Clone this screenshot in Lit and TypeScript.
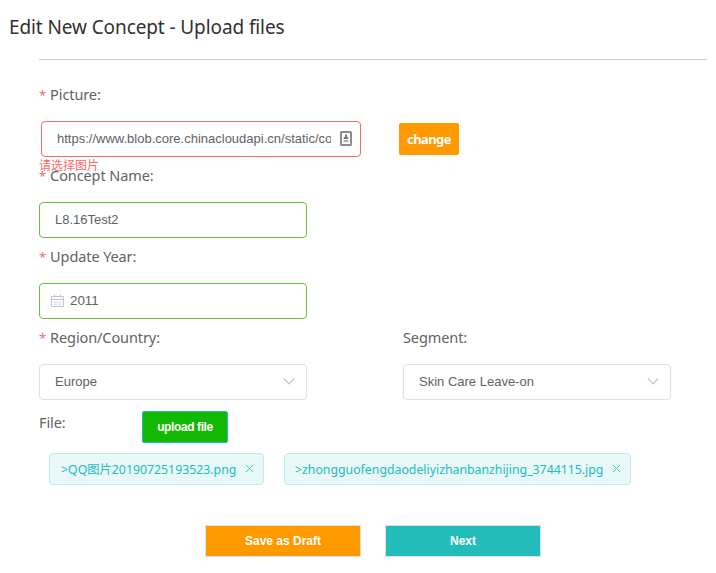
import { LitElement, html, css } from "lit";
import { customElement } from "lit/decorators.js";

const chevron = html`<svg class="chev" viewBox="0 0 12 8" width="12" height="8">
  <path d="M.8 1.5 6 6.8 11.2 1.5" fill="none" stroke="#c0c4cc" stroke-width="1.2" />
</svg>`;

const closeIcon = html`<svg class="close" viewBox="0 0 9 9" width="9" height="9">
  <path d="M.8 .8 8.2 8.2M8.2 .8 .8 8.2" fill="none" stroke="#4fc4c4" stroke-width="1" />
</svg>`;

const calendar = html`<svg class="cal" viewBox="0 0 13 13" width="13" height="13">
  <g fill="none" stroke="#c0c4cc">
    <path d="M.5 2.5h12v10H.5zM.5 5.5h12M3.5 .5v3M9.5 .5v3" />
    <path d="M3 8h7M3 10.2h7" stroke-dasharray="1.6 1.1" />
  </g>
</svg>`;

const contact = html`<svg viewBox="0 0 12 15" width="12" height="15">
  <rect x="1" y="1" width="10" height="13" rx=".6" fill="#fff" stroke="#8c8c8c" stroke-width="2" />
  <path d="M5 3.5h2V6h1.2v2H3.8V6H5z" fill="#777" />
  <path d="M3.5 9h5v2.2h-5z" fill="#b0b0b0" />
</svg>`;

@customElement("app-root")
export class AppRoot extends LitElement {
  static styles = css`
    :host {
      display: block;
      box-sizing: border-box;
      height: 573px;
      overflow: hidden;
      background: #fff;
      color: #606266;
      font-family: "Noto Sans", "Noto Sans CJK SC", sans-serif;
    }
    * { box-sizing: border-box; }
    svg { display: block; flex: none; }
    h1 {
      margin: 0;
      padding: 12px 0 0 9px;
      height: 59px;
      font-size: 19px;
      line-height: 30px;
      font-weight: 400;
      letter-spacing: -0.1px;
      color: #303133;
      white-space: nowrap;
    }
    .body { margin: 0 9px 0 39px; border-top: 1px solid #c8c8c8; padding-top: 15px; }
    .label { height: 40px; line-height: 38px; font-size: 14.5px; letter-spacing: -0.1px; white-space: nowrap; }
    .req::before { content: "*"; color: #f56c6c; font-size: 13px; margin-right: 4px; }
    .item { height: 81px; }
    .box {
      display: flex;
      align-items: center;
      width: 268px;
      height: 36px;
      margin-top: 6px;
      padding: 0 11px 2px 15px;
      border: 1px solid #dcdfe6;
      border-radius: 4px;
      font: 13px "Liberation Sans", sans-serif;
      white-space: nowrap;
    }
    .valid { border-color: #67c23a; }
    .picrow { display: flex; align-items: center; height: 36px; margin: 6px 0 0 2px; }
    .pic { width: 320px; margin: 0; border-color: #f56c6c; padding-right: 8px; }
    .url { width: 274px; overflow: hidden; margin-right: 9px; }
    .error { height: 0; font-size: 12px; line-height: 12px; position: relative; top: 3px; color: #f56c6c; }
    .change {
      width: 60px;
      height: 32px;
      margin-left: 38px;
      border-radius: 2px;
      background: #ff9900;
      color: #fff;
      font-size: 13px;
      font-weight: 700;
      letter-spacing: -0.6px;
      line-height: 32px;
      text-align: center;
    }
    .year { padding-left: 11px; font-size: 13.33px; }
    .cal { margin-right: 6px; }
    .cols { display: flex; gap: 96px; }
    .chev { margin-left: auto; }
    .file { display: flex; align-items: flex-start; height: 52px; padding-top: 4px; }
    .file .label { width: 103px; }
    .upload {
      width: 86px;
      height: 32px;
      margin-top: 8px;
      border: 1px solid #22bdbd;
      border-radius: 2px;
      background: #13b803;
      color: #fff;
      font: 700 12px/30px "Liberation Sans", sans-serif;
      letter-spacing: -0.4px;
      text-align: center;
    }
    .tags { display: flex; gap: 20px; padding: 2px 0 0 10px; }
    .tag {
      display: flex;
      justify-content: space-between;
      height: 32px;
      padding: 0 9px 0 11px;
      border: 1px solid #bdebeb;
      border-radius: 4px;
      background: #e8f7f7;
      color: #22bdbd;
      font-size: 12.3px;
      line-height: 31px;
      white-space: nowrap;
    }
    .t1 { width: 215px; }
    .t2 { width: 347px; padding-left: 10px; }
    .close { margin-top: 10px; }
    .actions { display: flex; gap: 24px; padding: 40px 0 0 166px; }
    .btn {
      width: 156px;
      height: 32px;
      border: 1px solid #dcdfe6;
      color: #fff;
      font: 700 12px/31px "Liberation Sans", sans-serif;
      text-align: center;
    }
    .draft { background: #ff9900; }
    .next { background: #22bdbb; }
  `;

  render() {
    return html`
      <h1>Edit New Concept - Upload files</h1>
      <div class="body">
        <div class="item">
          <div class="label req">Picture:</div>
          <div class="picrow">
            <div class="box pic"><span class="url">https://www.blob.core.chinacloudapi.cn/static/concept</span>${contact}</div>
            <div class="change">change</div>
          </div>
          <div class="error">请选择图片</div>
        </div>
        <div class="item">
          <div class="label req">Concept Name:</div>
          <div class="box valid">L8.16Test2</div>
        </div>
        <div class="item">
          <div class="label req">Update Year:</div>
          <div class="box valid year">${calendar}2011</div>
        </div>
        <div class="cols item">
          <div>
            <div class="label req">Region/Country:</div>
            <div class="box">Europe${chevron}</div>
          </div>
          <div>
            <div class="label">Segment:</div>
            <div class="box">Skin Care Leave-on${chevron}</div>
          </div>
        </div>
        <div class="file"><div class="label">File:</div><div class="upload">upload file</div></div>
        <div class="tags">
          <div class="tag t1"><span>&gt;QQ图片20190725193523.png</span>${closeIcon}</div>
          <div class="tag t2"><span>&gt;zhongguofengdaodeliyizhanbanzhijing_3744115.jpg</span>${closeIcon}</div>
        </div>
        <div class="actions"><div class="btn draft">Save as Draft</div><div class="btn next">Next</div></div>
      </div>
    `;
  }
}
